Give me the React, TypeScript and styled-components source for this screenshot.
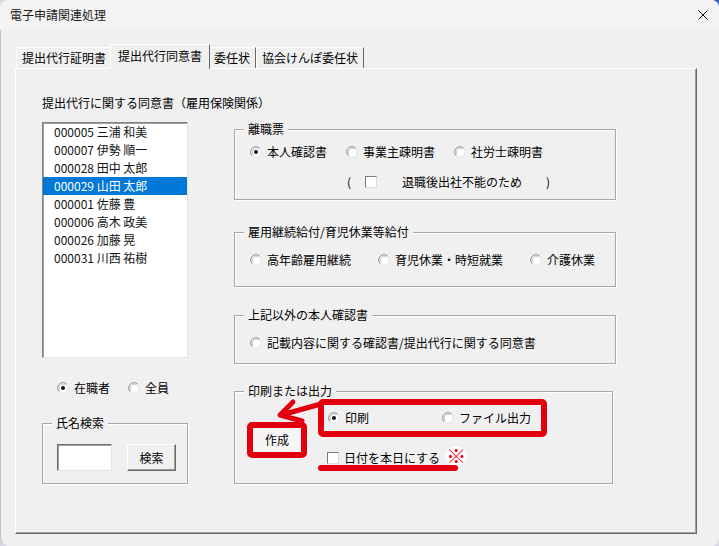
import React from 'react';
import styled, { createGlobalStyle } from 'styled-components';

const RED = '#e2000f';

const GlobalStyle = createGlobalStyle`
  html, body { margin: 0; padding: 0; }
  body {
    width: 719px;
    height: 546px;
    overflow: hidden;
    background: linear-gradient(#3a62c2, #3a62c2) right top / 40px 40px no-repeat, #d5d8de;
    font-family: "Noto Sans CJK JP", "Noto Sans", sans-serif;
    font-size: 12px;
    line-height: 14px;
    color: #000;
  }
  #root { width: 719px; height: 546px; }
`;

const Window = styled.div`
  width: 719px;
  height: 546px;
  box-sizing: border-box;
  display: flex;
  flex-direction: column;
  background: #f0f0f0;
  border-radius: 8px;
  overflow: hidden;
  box-shadow: inset 1px 0 0 #bcc0c8;
`;

const TitleBar = styled.div`
  height: 30px;
  flex: none;
  display: flex;
  align-items: center;
  justify-content: space-between;
  padding: 0 11px 0 10px;
  background: #f3f3f3;
`;

const Title = styled.span`
  color: #1b1b1b;
`;

const Body = styled.div`
  flex: 1;
  min-height: 0;
  display: flex;
  flex-direction: column;
  padding: 14px 22px 12px 15px;
`;

const TabStrip = styled.div`
  display: flex;
  align-items: flex-end;
  height: 25px;
  margin-bottom: -1px;
  padding-left: 1px;
  position: relative;
  z-index: 1;
`;

const Tab = styled.div<{ $active?: boolean }>`
  box-sizing: border-box;
  display: flex;
  align-items: center;
  height: ${(p) => (p.$active ? 25 : 21)}px;
  margin: ${(p) => (p.$active ? '0 -2px 0 -2px' : '0 0 1px 0')};
  padding: ${(p) => (p.$active ? '0 7px 3px' : '0 5px')};
  background: #f0f0f0;
  border-top: 1px solid #fff;
  border-left: 1px solid #fff;
  border-right: 1px solid #696969;
  position: relative;
  z-index: ${(p) => (p.$active ? 2 : 1)};
  white-space: nowrap;
`;

const Panel = styled.div`
  flex: 1;
  box-sizing: border-box;
  border-top: 1px solid #fff;
  border-left: 1px solid #fff;
  border-right: 1px solid #696969;
  border-bottom: 1px solid #696969;
  box-shadow: inset -1px -1px 0 #a0a0a0;
  display: grid;
  grid-template-columns: 146px 382px;
  grid-template-rows: auto 1fr;
  align-content: start;
  column-gap: 46px;
  row-gap: 12px;
  padding: 27px 0 0 26px;
`;

const Heading = styled.div`
  grid-column: 1 / -1;
  white-space: nowrap;
`;

const LeftCol = styled.div`
  display: flex;
  flex-direction: column;
`;

const ListBox = styled.div`
  box-sizing: border-box;
  height: 236px;
  background: #fff;
  border: 1px solid;
  border-color: #828282 #e3e3e3 #e3e3e3 #828282;
  box-shadow: inset 1px 1px 0 #a0a0a0;
`;

const ListItem = styled.div<{ $selected?: boolean }>`
  height: 18px;
  line-height: 18px;
  padding-left: 11px;
  white-space: nowrap;
  color: ${(p) => (p.$selected ? '#fff' : '#141414')};
  background: ${(p) => (p.$selected ? '#0078d7' : 'transparent')};
`;

const ScopeRow = styled.div`
  display: flex;
  gap: 18px;
  margin-top: 23px;
  padding-left: 15px;
`;

const Group = styled.div<{ $h: number; $w?: number; $gapTop?: number }>`
  position: relative;
  box-sizing: border-box;
  height: ${(p) => p.$h}px;
  width: ${(p) => (p.$w ? `${p.$w}px` : 'auto')};
  margin-top: ${(p) => p.$gapTop ?? 0}px;
  border: 1px solid #a8a8a8;
  box-shadow: 1px 1px 0 #fff, inset 1px 1px 0 #fff;
`;

const Legend = styled.span`
  position: absolute;
  top: -8px;
  left: 9px;
  padding: 0 4px;
  background: #f0f0f0;
  line-height: 14px;
  white-space: nowrap;
`;

const SearchBody = styled.div`
  display: flex;
  gap: 15px;
  padding: 20px 0 0 14px;
`;

const TextBox = styled.div`
  box-sizing: border-box;
  width: 55px;
  height: 27px;
  background: #fff;
  border: 1px solid;
  border-color: #6d6d6d #e3e3e3 #e3e3e3 #6d6d6d;
  box-shadow: inset 1px 1px 0 #a0a0a0;
`;

const PushButton = styled.div`
  box-sizing: border-box;
  width: 49px;
  height: 27px;
  display: flex;
  align-items: center;
  justify-content: center;
  background: #f0f0f0;
  border: 1px solid;
  border-color: #fff #696969 #696969 #fff;
  box-shadow: inset -1px -1px 0 #a0a0a0;
`;

const RightCol = styled.div`
  display: flex;
  flex-direction: column;
  padding-top: 7px;
`;

const GroupBody = styled.div<{ $top: number }>`
  padding: ${(p) => p.$top}px 0 0 15px;
`;

const OptionRow = styled.div<{ $gap: number }>`
  display: flex;
  align-items: center;
  gap: ${(p) => p.$gap}px;
`;

const Option = styled.label`
  display: inline-flex;
  align-items: center;
  gap: 5px;
  height: 14px;
  white-space: nowrap;
`;

const NoteRow = styled.div`
  display: flex;
  align-items: center;
  height: 14px;
  margin-top: 16px;
  padding-left: 97px;
  white-space: nowrap;
`;

const Spaced = styled.span<{ $left: number }>`
  margin-left: ${(p) => p.$left}px;
`;

const Check = styled.span<{ $left?: number }>`
  box-sizing: border-box;
  display: inline-block;
  width: 12px;
  height: 12px;
  margin-left: ${(p) => p.$left ?? 0}px;
  background: #fff;
  border: 1px solid;
  border-color: #7a7a7a #dcdcdc #dcdcdc #7a7a7a;
  flex: none;
`;

const OutputBody = styled.div`
  display: flex;
  padding: 7px 0 0 12px;
`;

const CalloutButton = styled.div`
  box-sizing: border-box;
  width: 60px;
  height: 36px;
  margin-top: 23px;
  margin-right: 11px;
  display: flex;
  align-items: center;
  justify-content: center;
  background: #f5f5f5;
  border: 6px solid ${RED};
  border-radius: 5px;
`;

const OutputStack = styled.div`
  display: flex;
  flex-direction: column;
`;

const RadioCallout = styled.div`
  box-sizing: border-box;
  width: 229px;
  height: 38px;
  display: flex;
  align-items: center;
  gap: 73px;
  padding-left: 4px;
  border: 6px solid ${RED};
  border-radius: 5px;
`;

const CheckRow = styled.div`
  display: flex;
  align-items: center;
  gap: 5px;
  height: 14px;
  margin-top: 14px;
  padding-left: 9px;
  white-space: nowrap;
`;

const Kome = styled.span`
  display: inline-flex;
  align-items: center;
  justify-content: center;
  width: 22px;
  height: 20px;
  margin-bottom: 4px;
  border-radius: 50%;
  background: rgba(255, 255, 255, 0.85);
  font-size: 20px;
  line-height: 20px;
  color: ${RED};
  flex: none;
`;

const Underline = styled.div`
  width: 140px;
  height: 6px;
  border-radius: 3px;
  background: ${RED};
`;

const ArrowLayer = styled.svg`
  position: absolute;
  left: 0;
  top: 0;
  overflow: visible;
  pointer-events: none;
`;

const RadioMark = ({ checked }: { checked?: boolean }) => (
  <svg width="12" height="12" viewBox="0 0 12 12" style={{ flex: 'none' }}>
    <circle cx="6" cy="6" r="5.5" fill="#fff" />
    <path d="M2.25 9.75 A5.3 5.3 0 0 1 9.75 2.25" stroke="#8a8a8a" fill="none" />
    <path d="M9.75 2.25 A5.3 5.3 0 0 1 2.25 9.75" stroke="#dedede" fill="none" />
    <path d="M3 8.6 A4 4 0 0 1 8.6 3" stroke="#c4c4c4" fill="none" />
    {checked && <circle cx="6" cy="6" r="2" fill="#111" />}
  </svg>
);

const CloseGlyph = () => (
  <svg width="10" height="10" viewBox="0 0 10 10">
    <path d="M0.5 0.5L9.5 9.5M9.5 0.5L0.5 9.5" stroke="#111" strokeWidth="1" />
  </svg>
);

const Radio = ({ label, checked }: { label: string; checked?: boolean }) => (
  <Option>
    <RadioMark checked={checked} />
    <span>{label}</span>
  </Option>
);

const staff = [
  '000005 三浦 和美',
  '000007 伊勢 順一',
  '000028 田中 太郎',
  '000029 山田 太郎',
  '000001 佐藤 豊',
  '000006 高木 政美',
  '000026 加藤 晃',
  '000031 川西 祐樹',
];

export default function App() {
  return (
    <>
      <GlobalStyle />
      <Window>
        <TitleBar>
          <Title>電子申請関連処理</Title>
          <CloseGlyph />
        </TitleBar>
        <Body>
          <TabStrip>
            <Tab>提出代行証明書</Tab>
            <Tab $active>提出代行同意書</Tab>
            <Tab>委任状</Tab>
            <Tab>協会けんぽ委任状</Tab>
          </TabStrip>
          <Panel>
            <Heading>提出代行に関する同意書（雇用保険関係）</Heading>
            <LeftCol>
              <ListBox>
                {staff.map((s) => (
                  <ListItem key={s} $selected={s.startsWith('000029')}>
                    {s}
                  </ListItem>
                ))}
              </ListBox>
              <ScopeRow>
                <Radio label="在職者" checked />
                <Radio label="全員" />
              </ScopeRow>
              <Group $h={61} $gapTop={28}>
                <Legend>氏名検索</Legend>
                <SearchBody>
                  <TextBox />
                  <PushButton>検索</PushButton>
                </SearchBody>
              </Group>
            </LeftCol>
            <RightCol>
              <Group $h={71}>
                <Legend>離職票</Legend>
                <GroupBody $top={15}>
                  <OptionRow $gap={19}>
                    <Radio label="本人確認書" checked />
                    <Radio label="事業主疎明書" />
                    <Radio label="社労士疎明書" />
                  </OptionRow>
                  <NoteRow>
                    <span>(</span>
                    <Check $left={14} />
                    <Spaced $left={25}>退職後出社不能のため</Spaced>
                    <Spaced $left={24}>)</Spaced>
                  </NoteRow>
                </GroupBody>
              </Group>
              <Group $h={55} $gapTop={32}>
                <Legend>雇用継続給付/育児休業等給付</Legend>
                <GroupBody $top={20}>
                  <OptionRow $gap={27}>
                    <Radio label="高年齢雇用継続" />
                    <Radio label="育児休業・時短就業" />
                    <Radio label="介護休業" />
                  </OptionRow>
                </GroupBody>
              </Group>
              <Group $h={49} $gapTop={28}>
                <Legend>上記以外の本人確認書</Legend>
                <GroupBody $top={20}>
                  <Radio label="記載内容に関する確認書/提出代行に関する同意書" />
                </GroupBody>
              </Group>
              <Group $h={93} $w={379} $gapTop={27}>
                <Legend>印刷または出力</Legend>
                <OutputBody>
                  <CalloutButton>作成</CalloutButton>
                  <OutputStack>
                    <RadioCallout>
                      <Radio label="印刷" checked />
                      <Radio label="ファイル出力" />
                    </RadioCallout>
                    <CheckRow>
                      <Check />
                      <span>日付を本日にする</span>
                      <Kome>※</Kome>
                    </CheckRow>
                    <Underline />
                  </OutputStack>
                </OutputBody>
                <ArrowLayer width="100" height="40" viewBox="0 0 100 40">
                  <path
                    d="M86 12 L46 23 M58 10 L45 23 L67 29"
                    stroke={RED}
                    strokeWidth="5"
                    strokeLinecap="round"
                    strokeLinejoin="round"
                    fill="none"
                  />
                </ArrowLayer>
              </Group>
            </RightCol>
          </Panel>
        </Body>
      </Window>
    </>
  );
}
